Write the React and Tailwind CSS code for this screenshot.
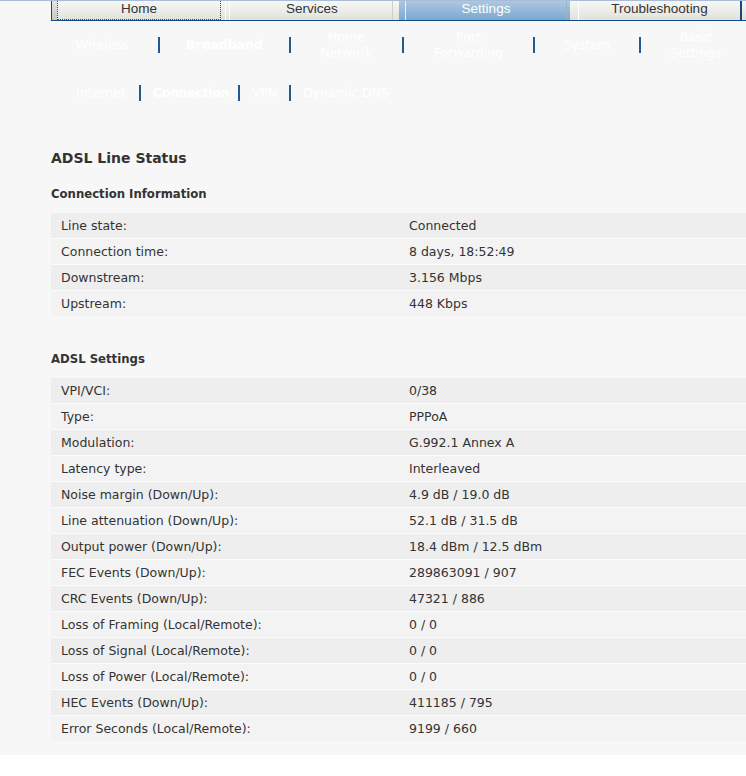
import React from "react";

const lineStatus = [
  ["Line state:", "Connected"],
  ["Connection time:", "8 days, 18:52:49"],
  ["Downstream:", "3.156 Mbps"],
  ["Upstream:", "448 Kbps"],
];

const adslSettings = [
  ["VPI/VCI:", "0/38"],
  ["Type:", "PPPoA"],
  ["Modulation:", "G.992.1 Annex A"],
  ["Latency type:", "Interleaved"],
  ["Noise margin (Down/Up):", "4.9 dB / 19.0 dB"],
  ["Line attenuation (Down/Up):", "52.1 dB / 31.5 dB"],
  ["Output power (Down/Up):", "18.4 dBm / 12.5 dBm"],
  ["FEC Events (Down/Up):", "289863091 / 907"],
  ["CRC Events (Down/Up):", "47321 / 886"],
  ["Loss of Framing (Local/Remote):", "0 / 0"],
  ["Loss of Signal (Local/Remote):", "0 / 0"],
  ["Loss of Power (Local/Remote):", "0 / 0"],
  ["HEC Events (Down/Up):", "411185 / 795"],
  ["Error Seconds (Local/Remote):", "9199 / 660"],
];

// top-level menu tabs
const TabBar = () => (
  <div className="flex h-[21px] border-t border-[#a8bdd7] font-['Liberation_Sans',Arial,sans-serif] text-[13.5px] leading-[15px]">
    <div className="w-[51px] shrink-0" />
    <div className="flex flex-1 border-l border-b border-[#0f4c86] bg-gradient-to-b from-[#f7f7f5] to-[#e1e1dc]">
      <div className="w-[5px] shrink-0 bg-gradient-to-b from-[#e4e4e0] to-[#c9c9c4]" />
      <div className="flex w-[164px] shrink-0 justify-center border-x border-b border-dotted border-[#1a5290] text-[#333]">
        Home
      </div>
      <div className="flex w-[11px] shrink-0 gap-[3px] pl-[4px]">
        <div className="w-px bg-white" />
        <div className="w-px bg-white" />
      </div>
      <div className="flex w-[161px] shrink-0 justify-center border-r border-[#cfcfca] text-[#333]">
        Services
      </div>
      <div className="w-[6px] shrink-0" />
      <div className="flex w-[171px] shrink-0 bg-gradient-to-b from-[#adc8e0] to-[#7ba8cf] pl-[6px] pr-[3px]">
        <div className="flex flex-1 justify-center border-l border-r border-l-[#e6f0f8] border-r-[#9bb6cc] text-white">
          Settings
        </div>
      </div>
      <div className="flex w-[172px] shrink-0 pl-[8px]">
        <div className="flex flex-1 justify-center border-l border-r-2 border-l-white border-r-[#17487a] text-[#333]">
          Troubleshooting
        </div>
      </div>
      <div className="flex-1" />
    </div>
  </div>
);

const Sep = () => <div className="h-[16px] w-[2px] shrink-0 bg-[#1c5b94]" />;

const subMenu = [
  { w: "w-[112px]", label: ["Wireless"] },
  { w: "w-[129px]", label: ["Broadband"], bold: true },
  { w: "w-[111px]", label: ["Home", "Network"] },
  { w: "w-[129px]", label: ["Port", "Forwarding"] },
  { w: "w-[104px]", label: ["System"] },
  { w: "w-[110px]", label: ["Basic", "Settings"] },
];

const subSubMenu = [
  { label: "Internet", w: "w-[51px]" },
  { label: "Connection", w: "w-[73px]", bold: true },
  { label: "VPN", w: "w-[25px]" },
  { label: "Dynamic DNS", w: "w-[84px]" },
];

const InfoTable = ({ rows }) => (
  <div className="flex flex-col">
    {rows.map(([label, value], i) => (
      <div
        key={label}
        className={`grid grid-cols-[348px_1fr] items-center ${
          i > 0 ? "h-[26px] border-t border-[#fbfbfb]" : "h-[25px]"
        } ${i % 2 === 0 ? "bg-[#eeeeee]" : "bg-[#f3f3f3]"}`}
      >
        <div className="pl-[10px] pt-[2px]">{label}</div>
        <div className="pl-[10px] pt-[2px]">{value}</div>
      </div>
    ))}
  </div>
);

export default function App() {
  return (
    <div className="min-h-screen w-[746px] overflow-hidden bg-white font-['DejaVu_Sans',Verdana,sans-serif] text-[#333]">
      <div className="bg-[#f7f7f7] pb-[14px]">
        <TabBar />

        {/* second level menu */}
        <div className="mt-[8px] flex items-center pl-[46px] text-[12.5px] leading-[16px] text-white">
          {subMenu.map((item, i) => (
            <React.Fragment key={item.label.join(" ")}>
              {i > 0 && <Sep />}
              <div
                className={`${item.w} shrink-0 text-center ${item.bold ? "font-bold" : ""} ${
                  item.label.length === 1 ? "py-[8px]" : ""
                }`}
              >
                {item.label.map((l) => (
                  <div key={l}>{l}</div>
                ))}
              </div>
            </React.Fragment>
          ))}
        </div>

        {/* third level menu */}
        <div className="mt-[24px] flex items-center gap-[12px] pl-[76px] text-[12.5px] leading-[16px] text-white">
          {subSubMenu.map((item, i) => (
            <React.Fragment key={item.label}>
              {i > 0 && <Sep />}
              <span className={`${item.w} shrink-0 whitespace-nowrap ${item.bold ? "font-bold tracking-[-0.3px]" : ""}`}>
                {item.label}
              </span>
            </React.Fragment>
          ))}
        </div>

        <div className="pl-[51px]">
          <h1 className="mt-[49px] text-[14px] font-bold leading-[17px]">ADSL Line Status</h1>
          <h2 className="mt-[20px] text-[11.7px] font-bold leading-[15px]">Connection Information</h2>
          <div className="mt-[11px] text-[12.5px]">
            <InfoTable rows={lineStatus} />
          </div>

          <h2 className="mt-[36px] text-[11.7px] font-bold leading-[15px]">ADSL Settings</h2>
          <div className="mt-[11px] text-[12.5px]">
            <InfoTable rows={adslSettings} />
          </div>
        </div>
      </div>
    </div>
  );
}
